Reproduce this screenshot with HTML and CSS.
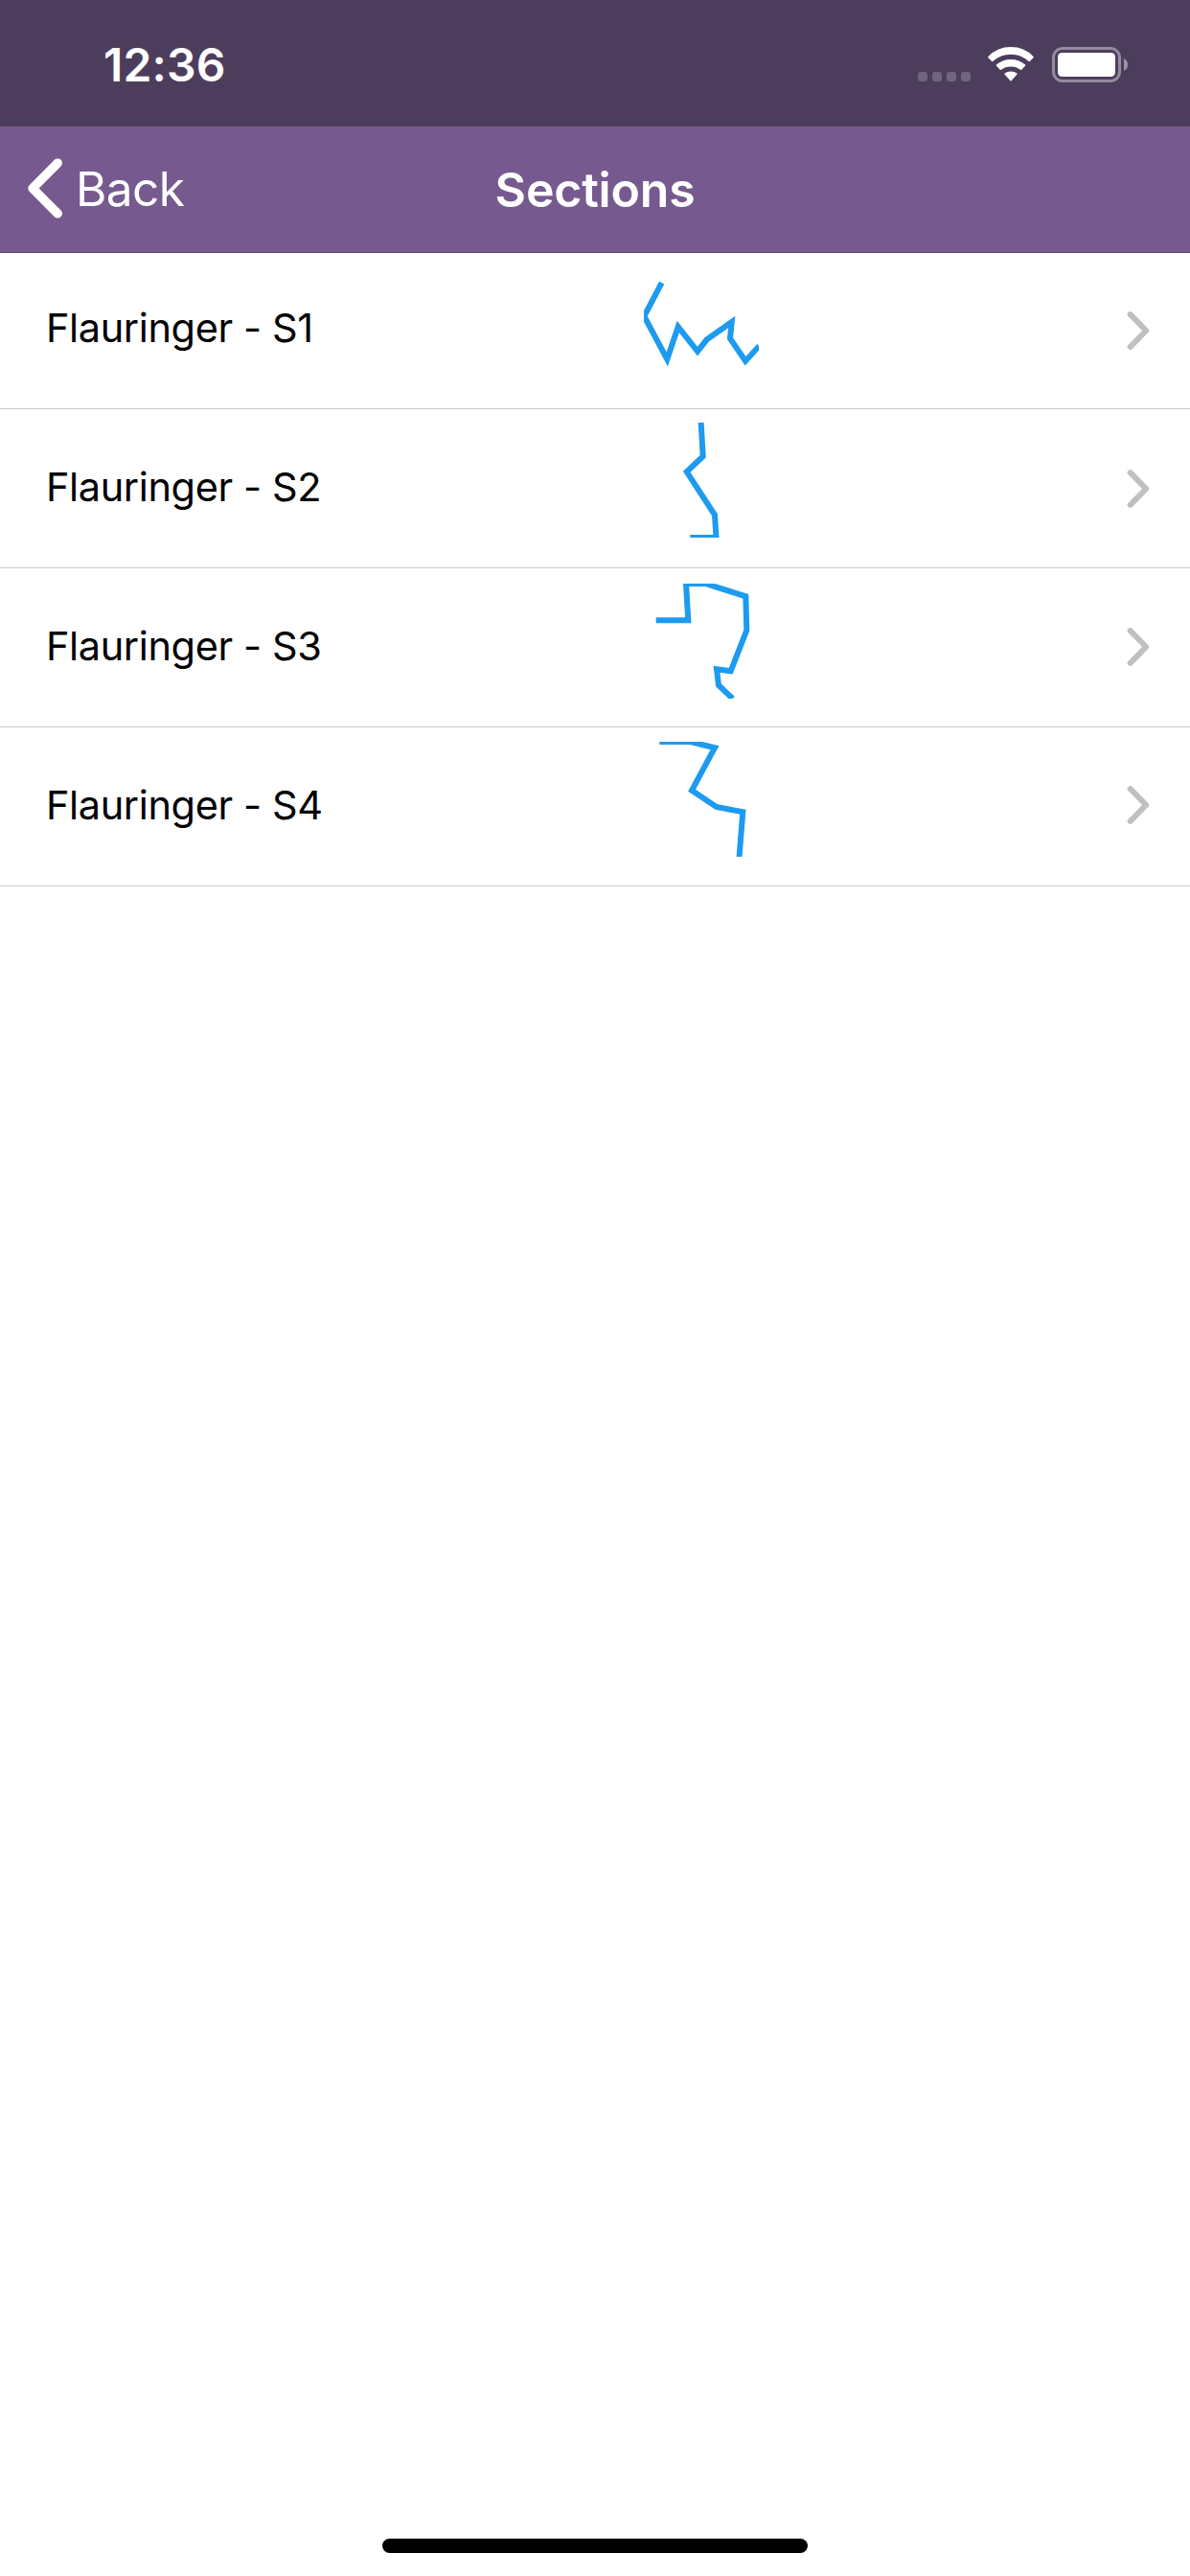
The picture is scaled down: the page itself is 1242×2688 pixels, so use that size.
FILE: index.html
```html
<!DOCTYPE html>
<html lang="en">
<head>
<meta charset="utf-8">
<title>Sections</title>
<link rel="stylesheet" href="styles.css">
</head>
<body>
<div class="screen">
  <header class="status">
    <span class="time">12:36</span>
    <div class="indicators">
      <svg class="signal" width="56" height="10" viewBox="0 0 56 10"><rect width="10" height="10" rx="3"/><rect x="15" width="10" height="10" rx="3"/><rect x="30" width="10" height="10" rx="3"/><rect x="45" width="10" height="10" rx="3"/></svg>
      <svg class="wifi" width="48" height="36" viewBox="0 0 48 36" fill="#fff"><path d="M.4 11.2Q-.1 10.5.4 9.9Q10 0 24 0T47.500 9.900Q48 10.500 47.500 11.200L43.800 15Q43.200 15.500 42.600 15Q34.700 7.700 24 7.700T5.300 15Q4.700 15.500 4.100 15Z"/><path d="M8.900 19.800Q8.400 19.200 8.900 18.600Q15 12.900 24 12.900T39 18.600Q39.500 19.200 39 19.800L35.200 23.800Q34.600 24.300 34 23.800Q30 20.400 24 20.400T13.900 23.800Q13.300 24.300 12.700 23.800Z"/><path d="M17.500 28.600Q17 28 17.600 27.500Q20.300 25.400 24 25.400T30.400 27.500Q31 28 30.500 28.600L24.600 35.200Q24 35.800 23.400 35.200Z"/></svg>
      <svg class="battery" width="80" height="38" viewBox="0 0 80 38"><rect x="1.500" y="1.500" width="69" height="34" rx="9.500" fill="none" stroke="#fff" stroke-opacity=".4" stroke-width="3"/><rect x="6" y="6" width="60" height="25" rx="4.500" fill="#fff"/><path d="M75 12Q79 14 79 18.500T75 25Z" fill="#fff" fill-opacity=".45"/></svg>
    </div>
  </header>
  <nav class="navbar">
    <a class="back">
      <svg width="40" height="66" viewBox="0 0 40 66" fill="none" stroke="#fff" stroke-width="9.500" stroke-linecap="round" stroke-linejoin="round"><path d="M33.200 6.200L7 32.500L33.200 58.800"/></svg>
      <span>Back</span>
    </a>
    <h1 class="title">Sections</h1>
  </nav>
  <main class="list">
    <div class="row first">
      <span class="name">Flauringer - S1</span>
      <svg class="shape" viewBox="0 0 120 120"><polyline points="18.700,19 0.300,54 24.300,99 35.700,65 56,90.700 65.700,78.300 91.700,60 90,77.300 106,100.700 120.400,85"/></svg>
      <svg class="chevron" viewBox="0 0 28 46"><path d="M5.700 6.200L22.200 23L5.700 39.800"/></svg>
    </div>
    <div class="row second">
      <span class="name">Flauringer - S2</span>
      <svg class="shape" viewBox="0 0 120 120"><polyline points="59.600,-1 61.700,35.300 44.700,51.300 74,96.300 75.500,120 48.300,120"/></svg>
      <svg class="chevron" viewBox="0 0 28 46"><path d="M5.700 6.200L22.200 23L5.700 39.800"/></svg>
    </div>
    <div class="row third">
      <span class="name">Flauringer - S3</span>
      <svg class="shape" viewBox="0 0 120 120"><polyline points="12.700,38.300 46.300,38.300 44,0 64.300,0 106.300,13.300 107.300,48.700 90.700,91.300 76,89.300 78,106 92.700,120"/></svg>
      <svg class="chevron" viewBox="0 0 28 46"><path d="M5.700 6.200L22.200 23L5.700 39.800"/></svg>
    </div>
    <div class="row fourth">
      <span class="name">Flauringer - S4</span>
      <svg class="shape" viewBox="0 0 120 120"><polyline points="16.300,0 48.700,0 74,6.300 50,50.700 75.700,68 103.300,73.300 99.500,121"/></svg>
      <svg class="chevron" viewBox="0 0 28 46"><path d="M5.700 6.200L22.200 23L5.700 39.800"/></svg>
    </div>
  </main>
  <footer class="home"><div class="home-bar"></div></footer>
</div>
</body>
</html>
```
FILE: styles.css
```css
* { box-sizing: border-box; }
body { margin: 0; background: #fff; font-family: Inter, "Liberation Sans", sans-serif; }
svg { display: block; flex: none; }
.screen { width: 1242px; height: 2688px; display: flex; flex-direction: column; }

.status { height: 132px; background: #4d3d5c; color: #fff; display: flex; justify-content: space-between; padding: 0 64px 0 108px; }
.time { font-size: 48px; font-weight: 600; line-height: 60px; letter-spacing: .2px; margin-top: 38px; }
.indicators { display: flex; align-items: flex-start; padding-top: 49px; }
.signal { margin-top: 26px; fill: #71647d; }
.wifi { margin-left: 17px; }
.battery { margin-left: 19px; }

.navbar { height: 132px; background: #765a8f; border-bottom: 1px solid #5e4872; color: #fff; display: grid; grid-template-columns: 1fr auto 1fr; align-items: center; padding: 0 27px; }
.back { display: flex; align-items: center; gap: 12px; font-size: 49.500px; line-height: 60px; letter-spacing: -.6px; padding-bottom: 1px; }
.title { margin: 0; font-size: 50px; line-height: 60px; font-weight: 600; letter-spacing: -.2px; }

.row { height: 166px; border-bottom: 1px solid #c8c7cc; display: grid; grid-template-columns: 624px 120px 1fr; align-items: start; padding: 0 40px 0 48px; }
.first { height: 163px; }
.name { font-size: 41.500px; line-height: 50px; letter-spacing: -.38px; color: #000; font-feature-settings: "calt" 0; margin-top: 56px; }
.first .name { margin-top: 53px; }
.shape { width: 120px; height: 120px; overflow: hidden; fill: none; stroke: #1d9bf0; stroke-width: 6; }
.first .shape { margin-top: 12px; }
.second .shape { margin-top: 14px; }
.third .shape { margin-top: 16px; }
.fourth .shape { margin-top: 15px; }
.chevron { width: 28px; height: 46px; margin-top: 59px; justify-self: end; fill: none; stroke: #c0c0c0; stroke-width: 6; stroke-linecap: round; stroke-linejoin: round; }
.first .chevron { margin-top: 58px; }
.second .chevron { margin-top: 60px; }
.fourth .chevron { margin-top: 58px; }

.home { margin-top: auto; height: 39px; display: flex; justify-content: center; }
.home-bar { width: 444px; height: 15px; border-radius: 8px; background: #000; }
```
